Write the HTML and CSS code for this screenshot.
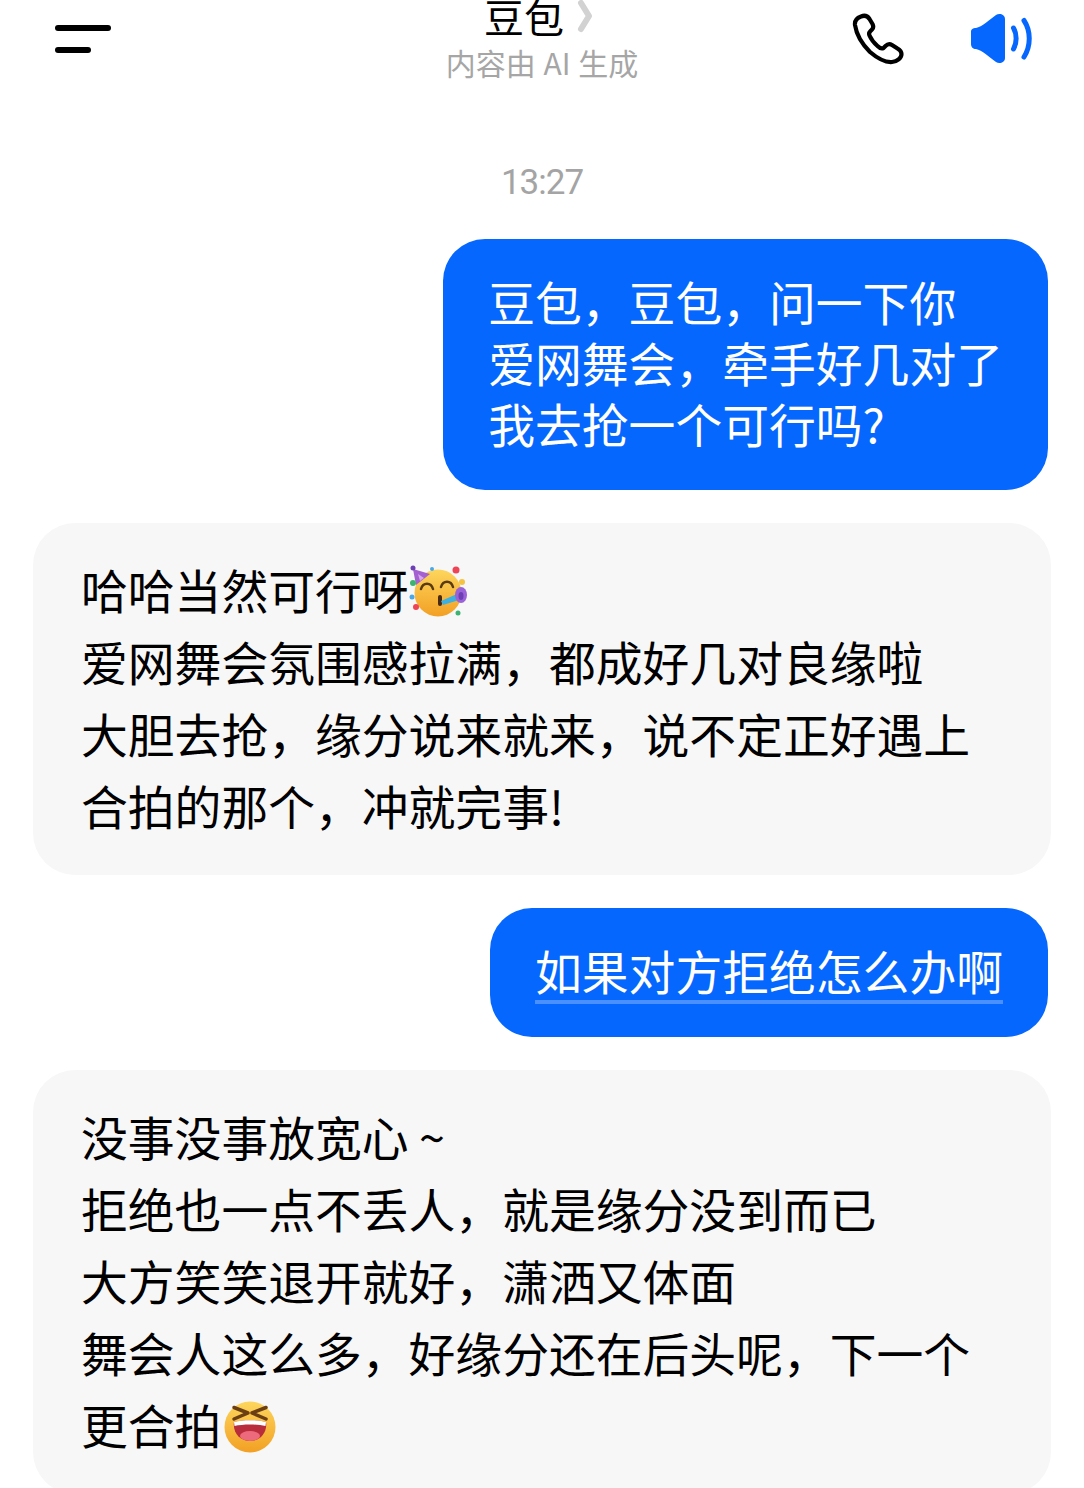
FILE: index.html
```html
<!DOCTYPE html>
<html lang="zh-CN">

<head>
    <meta charset="UTF-8">
    <meta name="viewport" content="width=device-width, initial-scale=1.0">
    <title>豆包</title>
    <link rel="stylesheet" href="styles.css">
</head>

<body>
    <header class="topbar">
        <div class="menu-icon">
            <span class="menu-line-long"></span>
            <span class="menu-line-short"></span>
        </div>
        <div class="title-box">
            <div class="title">
                豆包
                <svg class="title-arrow" width="16" height="34" viewBox="0 0 16 34">
                    <path d="M4 4 L12 17 L4 30" fill="none" stroke="#d2d2d2" stroke-width="6" stroke-linecap="round" stroke-linejoin="round" />
                </svg>
            </div>
            <div class="subtitle">内容由 AI 生成</div>
        </div>
        <div class="top-actions">
            <svg class="phone-icon" width="52" height="52" viewBox="0 0 52 52">
                <path d="M9 3.500 C5 5 2.500 8 3 12 C4.500 22 10 31 18 39 C25 45 33 49.500 40 49 C45 48.500 49.500 45 49.500 41 C49.500 38.500 48 37 45.500 35.500 L40 32 C37.500 30.500 35.500 31 33.500 33 L31.500 35 C29.500 36 27.500 35 25.500 33 C21.500 29.500 19 26 17.500 22.500 C16.500 20.500 17 19.500 18.500 18 L20 16.500 C21.500 15 21.500 13 20.500 11 L17.500 6 C15.500 3 12.500 2 9 3.500 Z" fill="none" stroke="#000" stroke-width="4.200" stroke-linejoin="round" />
            </svg>
            <svg class="speaker-icon" width="62" height="52" viewBox="0 0 62 52">
                <path d="M1 19 C1 16 3 15 6 15 C12 14 19 7 26 2 C29 0 35 1 35 6 L35 45 C35 50 29 51 26 49 C19 44 12 37 6 36 C3 36 1 34 1 31 Z" fill="#0567fd" />
                <path d="M43.500 15 C47 21 47 30 43.500 36" fill="none" stroke="#0567fd" stroke-width="5" stroke-linecap="round" />
                <path d="M54 7.500 C61 18 61 33 54 44" fill="none" stroke="#0567fd" stroke-width="5" stroke-linecap="round" />
            </svg>
        </div>
    </header>

    <main class="chat">
        <div class="time">13:27</div>

        <div class="bubble user-bubble">豆包，豆包，问一下你<br>爱网舞会，牵手好几对了<br>我去抢一个可行吗?</div>

        <div class="bubble bot-bubble">
            哈哈当然可行呀<svg class="emoji party-emoji" width="58" height="58" viewBox="0 0 58 58">
                <defs>
                    <linearGradient id="faceA" x1="0" y1="0" x2="0" y2="1">
                        <stop offset="0" stop-color="#fdd65c" />
                        <stop offset="1" stop-color="#f2a024" />
                    </linearGradient>
                </defs>
                <circle cx="29" cy="30" r="23.500" fill="url(#faceA)" />
                <path d="M4 6 L21 11 L7 22 Z" fill="#a45fd0" />
                <path d="M9 11 L15 15 L11 18 Z" fill="#d9a6ee" />
                <circle cx="4" cy="5" r="2.500" fill="#6d3fb5" />
                <circle cx="23" cy="6" r="2" fill="#4aa8e8" />
                <circle cx="47" cy="7" r="3.500" fill="#ee4455" />
                <circle cx="53" cy="19" r="3" fill="#f5c242" />
                <circle cx="4" cy="20" r="3" fill="#3cb371" />
                <circle cx="3" cy="34" r="2.500" fill="#4aa8e8" />
                <circle cx="7" cy="44" r="3" fill="#ee4455" />
                <circle cx="49" cy="50" r="2.500" fill="#3cb371" />
                <path d="M12 26 C14 19 22 19 24 26" fill="none" stroke="#5a3a10" stroke-width="2.500" stroke-linecap="round" />
                <path d="M32 24 C34 17 42 17 44 24" fill="none" stroke="#5a3a10" stroke-width="2.500" stroke-linecap="round" />
                <path d="M31 34 L31 41" stroke="#4a2a10" stroke-width="4" stroke-linecap="round" />
                <path d="M32 38 L48 31 L50 37 L34 42 Z" fill="#3cb0e0" />
                <ellipse cx="52" cy="32" rx="6" ry="8" fill="#9a62d8" />
                <ellipse cx="52" cy="33" rx="2.500" ry="4" fill="#6d3fb5" />
            </svg><br>
            爱网舞会氛围感拉满，都成好几对良缘啦<br>
            大胆去抢，缘分说来就来，说不定正好遇上<br>
            合拍的那个，冲就完事!
        </div>

        <div class="bubble user-bubble"><span class="link-text">如果对方拒绝怎么办啊</span></div>

        <div class="bubble bot-bubble">
            没事没事放宽心 ~<br>
            拒绝也一点不丢人，就是缘分没到而已<br>
            大方笑笑退开就好，潇洒又体面<br>
            舞会人这么多，好缘分还在后头呢，下一个<br>
            更合拍<svg class="emoji laugh-emoji" width="52" height="52" viewBox="0 0 52 52">
                <defs>
                    <linearGradient id="faceB" x1="0" y1="0" x2="0" y2="1">
                        <stop offset="0" stop-color="#fdd65c" />
                        <stop offset="1" stop-color="#f2a024" />
                    </linearGradient>
                </defs>
                <circle cx="26" cy="26" r="25.500" fill="url(#faceB)" />
                <path d="M10 6.500 L24 12 L10 18" fill="none" stroke="#6b3f14" stroke-width="3.500" stroke-linecap="round" stroke-linejoin="round" />
                <path d="M42 6.500 L28 12 L42 18" fill="none" stroke="#6b3f14" stroke-width="3.500" stroke-linecap="round" stroke-linejoin="round" />
                <path d="M10 21 C18 18.500 34 18.500 42 21 C43.500 32 36 40 26 40 C16 40 8.500 32 10 21 Z" fill="#b92c3c" />
                <path d="M10 21 C18 18.500 34 18.500 42 21 L41.500 25 C33 23 19 23 10.500 25 Z" fill="#fff" />
                <ellipse cx="26" cy="35" rx="10" ry="5" fill="#ec6a7c" />
            </svg>
        </div>
    </main>
</body>

</html>
```
FILE: styles.css
```css
* {
    box-sizing: border-box;
}

html,
body {
    height: 1488px;
    overflow: hidden;
}

body {
    margin: 0;
    background-color: #fff;
    color: #000;
    font-family: "Noto Sans CJK SC", "Noto Sans", sans-serif;
}

.topbar {
    position: relative;
    height: 92px;
    padding: 25px 52px 0 55px;
    display: flex;
    justify-content: space-between;
    align-items: flex-start;
}

.menu-icon {
    width: 56px;
    display: flex;
    flex-direction: column;
    gap: 16px;
}

.menu-line-long {
    display: block;
    width: 56px;
    height: 6px;
    border-radius: 3px;
    background-color: #000;
}

.menu-line-short {
    display: block;
    width: 36px;
    height: 6px;
    border-radius: 3px;
    background-color: #000;
}

.title-box {
    position: absolute;
    top: -6px;
    left: 0;
    right: 0;
    text-align: center;
}

.title {
    font-size: 40px;
    line-height: 44px;
    display: flex;
    justify-content: center;
    align-items: center;
    gap: 13px;
}

.title-arrow {
    margin-right: 7px;
}

.subtitle {
    margin-top: 4px;
    font-size: 30px;
    line-height: 40px;
    word-spacing: 1px;
    color: #a6a6a6;
}

.top-actions {
    margin-top: -12px;
    display: flex;
    align-items: center;
    gap: 66px;
}

.chat {
    padding-top: 68px;
    display: flex;
    flex-direction: column;
    align-items: flex-end;
}

.time {
    align-self: center;
    font-family: Roboto, sans-serif;
    font-size: 35px;
    line-height: 46px;
    letter-spacing: -1px;
    color: #a4a4a4;
    margin-bottom: 33px;
}

.bubble {
    font-size: 46.8px;
}

.user-bubble {
    margin-right: 36px;
    margin-bottom: 33px;
    padding: 31px 45px 37px;
    border-radius: 42px;
    background-color: #0567fd;
    color: #fff;
    line-height: 61px;
}

.link-text {
    display: block;
    height: 65px;
    margin-bottom: -4px;
    border-bottom: 4px solid #4a90ff;
}

.bot-bubble {
    align-self: flex-start;
    width: 1018px;
    margin-left: 33px;
    margin-bottom: 33px;
    padding: 30px 48px 34px;
    border-radius: 42px;
    background-color: #f7f7f7;
    line-height: 72px;
}

.emoji {
    vertical-align: middle;
    margin-top: -8px;
}

.party-emoji {
    margin-left: 0;
}

.laugh-emoji {
    margin-left: 3px;
}
```
